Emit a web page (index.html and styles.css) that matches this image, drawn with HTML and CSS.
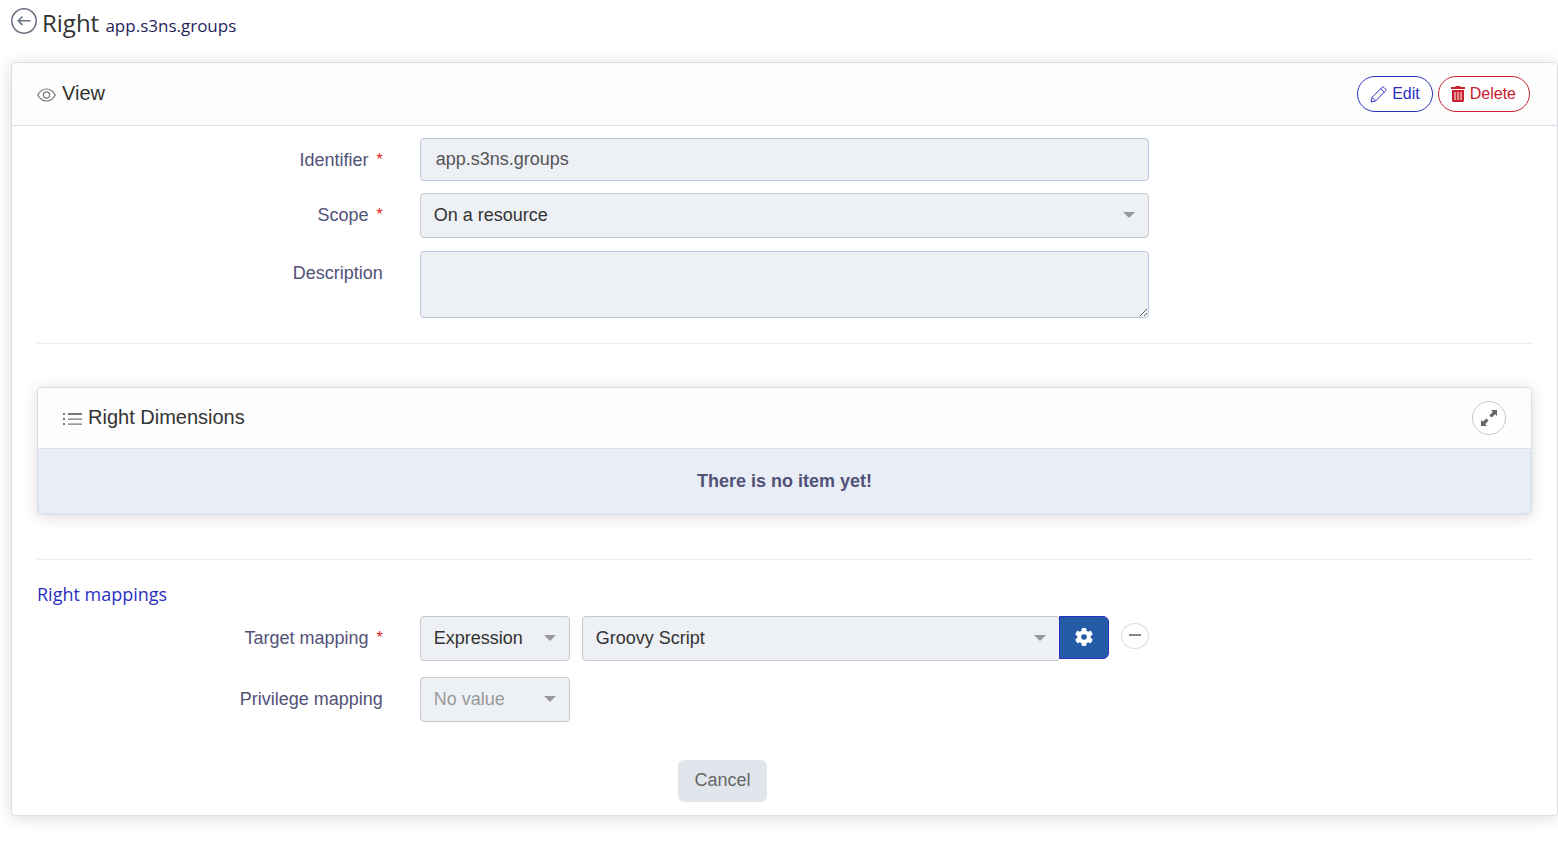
FILE: index.html
```html
<!DOCTYPE html>
<html lang="en">
<head>
<meta charset="utf-8">
<title>Right app.s3ns.groups</title>
<link rel="stylesheet" href="styles.css">
</head>
<body>
<header class="page-header">
  <a class="back" href="#" aria-label="Back">
    <svg width="26" height="26" viewBox="0 0 26 26" fill="none" stroke="currentColor" stroke-width="1.5"><circle cx="13" cy="13" r="12.2"/><path d="M19.5 12.8H7.5M11.5 8.500 7.200 12.800l4.300 4.300"/></svg>
  </a>
  <h1 class="page-title">Right <small class="page-subtitle">app.s3ns.groups</small></h1>
</header>
<main class="card">
  <div class="card-header">
    <h2 class="card-title">
      <svg width="19" height="14" viewBox="0 0 19 14" fill="none" stroke="currentColor" stroke-width="1.2"><path d="M.7 7C3 3 6 1 9.500 1S16 3 18.300 7C16 11 13 13 9.500 13S3 11 .7 7Z"/><circle cx="9.500" cy="7" r="3.100"/></svg>
      View
    </h2>
    <div class="toolbar">
      <button class="pill pill-edit" type="button">
        <svg width="17" height="17" viewBox="0 0 17 17" fill="none" stroke="currentColor" stroke-width="1" stroke-linejoin="round"><path d="M1 16l1.100-4.600L12 1.500c.6-.6 1.400-.6 2 0L15.500 3c.6.6.6 1.400 0 2L5.600 14.900 1 16ZM2.100 11.400l3.500 3.500M10.800 2.700l3.500 3.500"/></svg>
        Edit
      </button>
      <button class="pill pill-delete" type="button">
        <svg width="14" height="16" viewBox="0 0 14 16" fill="currentColor" fill-rule="evenodd"><path d="M0 1h4.200L5 0h4l.8 1H14v2H0ZM1 4h12v10.500c0 .8-.7 1.500-1.500 1.500h-9C1.700 16 1 15.300 1 14.500ZM3.500 6v8h1V6ZM6.500 6v8h1V6ZM9.500 6v8h1V6Z"/></svg>
        Delete
      </button>
    </div>
  </div>
  <form class="card-body">
    <div class="row">
      <label class="label" for="identifier">Identifier <span class="required">*</span></label>
      <div class="control"><input class="field" id="identifier" type="text" value="app.s3ns.groups" disabled></div>
    </div>
    <div class="row">
      <label class="label" for="scope">Scope <span class="required">*</span></label>
      <div class="control">
        <div class="select"><select class="select-box" id="scope" disabled><option>On a resource</option></select></div>
      </div>
    </div>
    <div class="row row-area">
      <label class="label" for="description">Description</label>
      <div class="control"><textarea class="field area" id="description" disabled></textarea></div>
    </div>
    <hr class="rule">
    <section class="card inner-card">
      <div class="card-header">
        <h2 class="card-title">
          <svg width="20" height="14" viewBox="0 0 20 14" fill="currentColor"><path d="M1 1h2v2H1ZM1 6h2v2H1ZM1 11h2v2H1ZM6 1h14v2H6ZM6 6.500h14v1.200H6ZM6 11.500h14v1.200H6Z"/></svg>
          Right Dimensions
        </h2>
        <button class="round" type="button" aria-label="Expand">
          <svg width="16" height="16" viewBox="0 0 16 16" fill="currentColor"><path d="M10 0h6v6l-1.800-1.800-3.700 3.300L8.500 5.500l3.300-3.700ZM6 16H0v-6l1.800 1.800L5.500 8.500l2 2-3.300 3.700Z"/></svg>
        </button>
      </div>
      <p class="empty">There is no item yet!</p>
    </section>
    <hr class="rule">
    <fieldset class="group">
      <legend class="legend">Right mappings</legend>
      <div class="row">
        <label class="label" for="target">Target mapping <span class="required">*</span></label>
        <div class="control">
          <div class="select select-short"><select class="select-box" id="target" disabled><option>Expression</option></select></div>
          <div class="joined">
            <div class="select"><select class="select-box" aria-label="Expression type" disabled><option>Groovy Script</option></select></div>
            <button class="settings" type="button" aria-label="Settings">
              <svg width="20" height="20" viewBox="0 0 20 20"><g fill="currentColor"><circle cx="10" cy="10" r="6.800"/><rect x="7.600" y="1" width="4.800" height="18" rx="1.200"/><rect x="7.600" y="1" width="4.800" height="18" rx="1.200" transform="rotate(60 10 10)"/><rect x="7.600" y="1" width="4.800" height="18" rx="1.200" transform="rotate(120 10 10)"/></g><circle class="gear-hole" cx="10" cy="10" r="2.800"/></svg>
            </button>
          </div>
          <button class="remove" type="button" aria-label="Remove">
            <svg width="12" height="2" viewBox="0 0 12 2"><path d="M0 0h12v2H0Z" fill="currentColor"/></svg>
          </button>
        </div>
      </div>
      <div class="row">
        <label class="label" for="privilege">Privilege mapping</label>
        <div class="control">
          <div class="select select-short"><select class="select-box placeholder" id="privilege" disabled><option>No value</option></select></div>
        </div>
      </div>
    </fieldset>
    <div class="row">
      <div class="actions"><button class="cancel" type="button">Cancel</button></div>
    </div>
  </form>
</main>
</body>
</html>
```
FILE: styles.css
```css
* { box-sizing: border-box; }
body {
  margin: 0;
  padding: 8px 0 37px 11px;
  background: #fff;
  color: #333;
  font: 18px/24px "Liberation Sans", Arial, sans-serif;
}
button, input, select, textarea { font: inherit; }
button { cursor: pointer; }
svg { display: block; flex: none; }

.page-header { display: flex; gap: 5px; height: 54px; }
.back { color: #6b7180; height: 26px; }
.page-title { margin: 0; font: 400 24px/30px "Open Sans", sans-serif; }
.page-subtitle { font-size: 17px; color: #1f1f5c; }

.card {
  border: 1px solid #dcdde2;
  border-radius: 4px;
  background: #fff;
  box-shadow: 0 2px 16px rgba(0, 0, 0, .14);
}
.card-header {
  display: flex;
  align-items: center;
  justify-content: space-between;
  padding: 13px 25px;
  border-bottom: 1px solid #dcdde2;
  border-radius: 4px 4px 0 0;
  background: #fdfdfd;
}
.card-title { display: flex; align-items: center; gap: 6px; margin: 0; padding-bottom: 2px; font-size: 20px; font-weight: 400; }
.card-title svg { color: #777; margin-top: 3px; }
.toolbar { display: flex; gap: 5px; padding-right: 2px; }
.pill {
  display: flex;
  align-items: center;
  gap: 5px;
  height: 36px;
  padding: 0 12px;
  border: 1px solid;
  border-radius: 18px;
  background: #fff;
  font-size: 16px;
}
.pill-edit { color: #2b2fc0; }
.pill-delete { padding: 0 13px 0 12px; color: #c8202f; }

.card-body { padding: 12px 25px 13px; }
.row { display: grid; grid-template-columns: 1fr 2fr 1fr; margin: 0 -18px 12px; }
.row-area { margin-top: 13px; }
.label { display: flex; justify-content: flex-end; gap: 8px; padding: 10px 19px 0 0; color: #525178; }
.required { color: #e02020; font-size: 16px; }
.control { display: flex; gap: 12px; padding: 0 18px; }
.field {
  width: 100%;
  height: 43px;
  padding: 0 15px;
  border: 1px solid #bcc6dc;
  border-radius: 4px;
  background: #edf0f5;
  color: #555;
}
.area { height: 67px; resize: vertical; }
.select { position: relative; flex: 1; }
.select::after {
  content: "";
  position: absolute;
  top: 19px;
  right: 14px;
  border: 6px solid transparent;
  border-top-color: #999;
  border-bottom: 0;
  pointer-events: none;
}
.select-short { flex: 0 0 150px; }
.select-box {
  appearance: none;
  width: 100%;
  height: 45px;
  padding: 0 13px 2px;
  border: 1px solid #c8c9cc;
  border-radius: 4px;
  background: #edf0f5;
  color: #333;
  opacity: 1;
}
.placeholder { color: #999; }
.rule { margin: 25px 0 43px; border: 0; border-top: 1px solid #ececee; }

.inner-card .card-header { padding: 13px 25px 13px 24px; }
.round {
  display: grid;
  place-items: center;
  width: 34px;
  height: 34px;
  padding: 0;
  border: 1px solid #c8c8c8;
  border-radius: 50%;
  background: #fff;
  color: #666;
}
.empty {
  margin: 0;
  padding: 20px 0;
  border: 1px solid #dae5f0;
  border-top: 0;
  border-radius: 4px;
  background: #e8edf6;
  color: #525178;
  font-weight: 700;
  text-align: center;
}
.inner-card + .rule { margin: 44px 0 20px; }
.group { margin: 0; padding: 0; border: 0; min-width: 0; }
.group .row { margin-bottom: 16px; }
.legend { padding: 0; margin-bottom: 8px; color: #2b2fc0; font: 18px/28px "Open Sans", sans-serif; }
.joined { display: flex; flex: 1; }
.settings {
  position: relative;
  display: grid;
  place-items: center;
  width: 50px;
  height: 43px;
  margin-left: -1px;
  padding: 0 0 2px;
  border: 1px solid #2b2fc0;
  border-radius: 0 6px 6px 0;
  background: #245ba7;
  color: #fff;
}
.gear-hole { fill: #245ba7; }
.remove {
  display: grid;
  place-items: center;
  width: 28px;
  height: 26px;
  margin-top: 7px;
  padding: 0 0 2px;
  border: 1px solid #dcdcdc;
  border-radius: 50%;
  background: #fff;
  color: #888;
}
.actions { grid-column: 2; display: flex; justify-content: center; padding: 22px 124px 0 0; }
.card-body > .row:last-child { margin-bottom: 0; }
.cancel { height: 42px; padding: 0 16px 2px; border: 0; border-radius: 6px; background: #e1e5ec; color: #666; }
```
